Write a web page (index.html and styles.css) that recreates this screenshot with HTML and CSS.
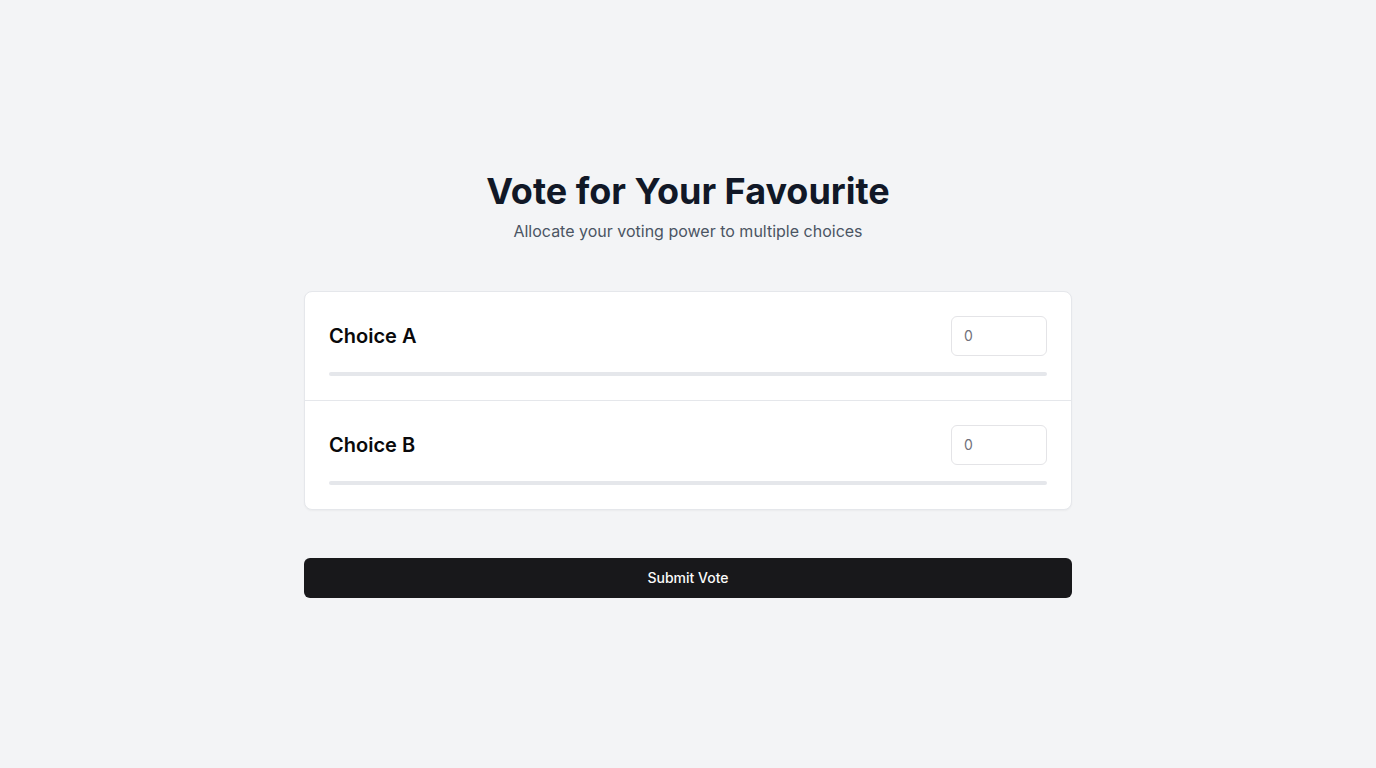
FILE: index.html
```html
<!DOCTYPE html>
<html lang="en">
<head>
<meta charset="utf-8">
<title>Vote</title>
<link rel="stylesheet" href="styles.css">
</head>
<body>
<main class="page">
  <div class="wrap">
    <header class="head">
      <h1 class="title">Vote for Your Favourite</h1>
      <p class="subtitle">Allocate your voting power to multiple choices</p>
    </header>
    <section class="card">
      <div class="row">
        <div class="row-top">
          <span class="label">Choice A</span>
          <input class="num" type="number" placeholder="0">
        </div>
        <div class="bar"><div class="fill" style="width:0%"></div></div>
      </div>
      <div class="row">
        <div class="row-top">
          <span class="label">Choice B</span>
          <input class="num" type="number" placeholder="0">
        </div>
        <div class="bar"><div class="fill" style="width:0%"></div></div>
      </div>
    </section>
    <button class="submit" type="button">Submit Vote</button>
  </div>
</main>
</body>
</html>
```
FILE: styles.css
```css
* { box-sizing: border-box; }
html, body { margin: 0; padding: 0; }
body {
  background: #f3f4f6;
  font-family: Inter, "Noto Sans", sans-serif;
  color: #111827;
}
.page {
  min-height: 768px;
  display: flex;
  align-items: center;
  justify-content: center;
}
.wrap {
  width: 768px;
  display: flex;
  flex-direction: column;
}
.head {
  text-align: center;
  margin-bottom: 48px;
}
.title {
  margin: 0 0 8px;
  font-size: 36px;
  line-height: 40px;
  font-weight: 700;
  color: #111827;
}
.subtitle {
  margin: 0;
  font-size: 16px;
  line-height: 24px;
  color: #4b5563;
}
.card {
  background: #fff;
  border: 1px solid #e5e7eb;
  border-radius: 8px;
  box-shadow: 0 1px 2px rgba(0,0,0,0.04);
}
.row {
  padding: 24px;
  display: flex;
  flex-direction: column;
  gap: 16px;
}
.row + .row { border-top: 1px solid #e5e7eb; }
.row-top {
  display: flex;
  align-items: center;
  justify-content: space-between;
}
.label {
  font-size: 20px;
  line-height: 28px;
  font-weight: 600;
  color: #09090b;
}
.num {
  width: 96px;
  height: 40px;
  border: 1px solid #e4e4e7;
  border-radius: 6px;
  padding: 0 12px;
  font-family: Inter, "Noto Sans", sans-serif;
  font-size: 14px;
  color: #09090b;
  background: #fff;
  outline: none;
  -moz-appearance: textfield;
}
.num::-webkit-outer-spin-button,
.num::-webkit-inner-spin-button { -webkit-appearance: none; margin: 0; }
.num::placeholder { color: #71717a; }
.bar {
  height: 4px;
  border-radius: 9999px;
  background: #e5e7eb;
  overflow: hidden;
}
.fill { height: 100%; background: #18181b; }
.submit {
  margin-top: 48px;
  height: 40px;
  border: 0;
  border-radius: 6px;
  background: #18181b;
  color: #fafafa;
  font-family: Inter, "Noto Sans", sans-serif;
  font-size: 14px;
  font-weight: 500;
  cursor: pointer;
}
```
